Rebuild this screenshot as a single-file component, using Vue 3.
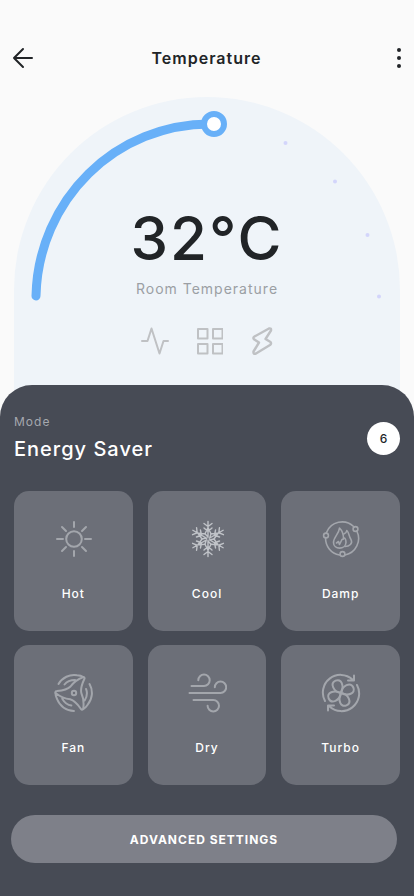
<script setup>
import { ref } from 'vue'

const modes = [
  { id: 'hot', label: 'Hot' },
  { id: 'cool', label: 'Cool' },
  { id: 'damp', label: 'Damp' },
  { id: 'fan', label: 'Fan' },
  { id: 'dry', label: 'Dry' },
  { id: 'turbo', label: 'Turbo' },
]
const temperature = ref(32)
const sixths = [0, 60, 120, 180, 240, 300]
const thirds = [0, 120, 240]
const quarters = [0, 90, 180, 270]
</script>

<template>
  <main class="screen">
    <header class="topbar">
      <button class="bar-button" type="button" aria-label="Back">
        <svg width="22" height="22" viewBox="0 0 22 22" class="ink">
          <path d="M20 11H2M11 2L2 11l9 9" />
        </svg>
      </button>
      <h1 class="title">Temperature</h1>
      <button class="bar-button end" type="button" aria-label="More options">
        <svg width="4" height="22" viewBox="0 0 4 22" class="dots">
          <circle cx="2" cy="3" r="2" />
          <circle cx="2" cy="11" r="2" />
          <circle cx="2" cy="19" r="2" />
        </svg>
      </button>
    </header>

    <section class="dial">
      <svg class="gauge" viewBox="0 0 386 210" aria-hidden="true">
        <path class="gauge-arc" d="M22 199C24 104 101 25 200 27" />
        <circle class="gauge-knob" cx="200" cy="27" r="10" />
        <g class="gauge-ticks">
          <circle cx="271.500" cy="46" r="2" />
          <circle cx="321" cy="84.500" r="2" />
          <circle cx="353.500" cy="138" r="2" />
          <circle cx="365" cy="199.500" r="2" />
        </g>
      </svg>
      <div class="readout">
        <p class="degrees">{{ temperature }}°C</p>
        <p class="caption">Room Temperature</p>
        <div class="tools">
          <button class="tool" type="button" aria-label="Activity">
            <svg width="28" height="28" viewBox="0 0 28 28">
              <path d="M1 14h5.500L10.500 1.500l8 25L22.500 14H27" />
            </svg>
          </button>
          <button class="tool" type="button" aria-label="Rooms">
            <svg width="28" height="28" viewBox="0 0 28 28">
              <path d="M3 2h9.500v9.500H3zM18 2h9.500v9.500H18zM3 17h9.500v9.500H3zM18 17h9.500v9.500H18z" />
            </svg>
          </button>
          <button class="tool" type="button" aria-label="Power">
            <svg width="28" height="28" viewBox="0 0 28 28" class="bolt">
              <path d="M20 1.500L5.500 9.500Q3.500 10.800 5 12.300L10 15.500 4.500 24.500Q4 27.500 7 26.500L21 18Q22.800 16.500 21.500 15L16.500 12 22 3.500Q22.500 .800 20 1.500z" />
            </svg>
          </button>
        </div>
      </div>
    </section>

    <section class="sheet">
      <div class="mode-head">
        <div>
          <p class="mode-label">Mode</p>
          <h2 class="mode-name">Energy Saver</h2>
        </div>
        <span class="badge">{{ modes.length }}</span>
      </div>

      <div class="mode-grid">
        <button v-for="mode in modes" :key="mode.id" class="mode-card" type="button">
          <svg class="mode-icon" :class="mode.id" width="40" height="40" viewBox="-1 0 40 40" aria-hidden="true">
            <g v-if="mode.id === 'hot'">
              <circle cx="20" cy="20" r="7.800" />
              <path d="M20 3v5M20 32v5M3 20h6M31 20h6M8 8l4 4M28 28l4 4M32 8l-4 4M12 28l-4 4" />
            </g>
            <g v-else-if="mode.id === 'cool'" transform="translate(20 20)">
              <path
                v-for="angle in sixths"
                :key="angle"
                :transform="`rotate(${angle})`"
                d="M0-1.500V-17.500M-4-15.500L0-12.500 4-15.500M-4-11L0-7.500 4-11M0-11.500L-3-5.200M0-11.500L3-5.200M0-2L-3-5.200"
              />
            </g>
            <g v-else-if="mode.id === 'damp'">
              <path d="M31.600 7.500A16.800 16.800 0 0 0 4.500 13.500M3.600 18.500A16.800 16.800 0 0 0 17.500 36M23 36A16.800 16.800 0 0 0 34.800 12" />
              <circle cx="33.500" cy="10" r="2.400" />
              <circle cx="4" cy="16.500" r="2.400" />
              <circle cx="20.500" cy="35" r="2.400" />
              <path d="M17.500 9C17 15 11.500 18 11.500 23.500C11.500 31 23.500 31 24 23.500C24 19.500 22.500 18.500 21.500 19.500C21.500 15 20 11.500 17.500 9z" />
              <path d="M21.800 15Q24.500 14 24.800 11.500C27.500 14 26.500 17 29 20.500C31 24.500 27.500 27.500 23 27.500M14.500 24l2-1.500 1 3 2.500-5 1.500-.500" />
            </g>
            <g v-else-if="mode.id === 'fan'" transform="translate(20 20)">
              <circle r="2.200" />
              <path
                v-for="angle in thirds"
                :key="angle"
                :transform="`rotate(${angle})`"
                d="M9.300-16C3-13.500-1-10-3.500-6.500C-6-4-11-2.500-17-2Q-19-2-18.500 0M-15.500-9A18 18 0 0 1 3-17.700Q7-17.500 9.300-16M-9.500-8.500Q-6-13 1-13"
              />
            </g>
            <g v-else-if="mode.id === 'dry'">
              <path d="M3.500 13H16a5.700 5.700 0 1 0-5.700-5.700M1.500 20H32.500a5.700 5.700 0 1 0-5.700-5.700M5.500 27H25.300a5.700 5.700 0 1 1-5.700 5.700" />
            </g>
            <g v-else transform="translate(19 20)">
              <path
                v-for="angle in quarters"
                :key="angle"
                :transform="`rotate(${angle - 24})`"
                d="M0 0C-6.500-4-6.500-13.500 0-13.500S6-5 0 0"
              />
              <path d="M-16 8A17.700 17.700 0 0 1 11.500-13.500M13-17.500v5H7M16-8A17.700 17.700 0 0 1-11.500 13.500M-13 17.500v-5H-7" />
            </g>
          </svg>
          <span class="mode-text">{{ mode.label }}</span>
        </button>
      </div>

      <button class="advanced" type="button">ADVANCED SETTINGS</button>
    </section>
  </main>
</template>

<style>
body {
  margin: 0;
  background: #fafafa;
}
</style>

<style scoped>
.screen {
  display: flex;
  flex-direction: column;
  min-height: 100vh;
  font-family: Inter, "Liberation Sans", sans-serif;
  letter-spacing: 1px;
  color: #212427;
}

button {
  margin: 0;
  padding: 0;
  border: 0;
  background: none;
  font: inherit;
  letter-spacing: inherit;
  color: inherit;
  cursor: pointer;
}

svg {
  display: block;
  fill: none;
  stroke-linecap: round;
  stroke-linejoin: round;
}

h1,
h2,
p {
  margin: 0;
}

.topbar {
  display: grid;
  grid-template-columns: 1fr auto 1fr;
  align-items: center;
  padding: 46px 13px 27px 12px;
}

.bar-button {
  justify-self: start;
}

.end {
  justify-self: end;
}

.ink {
  stroke: #212427;
  stroke-width: 2;
}

.dots {
  fill: #212427;
}

.title {
  font-size: 16px;
  line-height: 24px;
  font-weight: 600;
}

.dial {
  display: grid;
  margin: 0 14px;
  padding-bottom: 70px;
  border-radius: 193px 193px 0 0;
  background: #eff4f9;
}

.gauge,
.readout {
  grid-area: 1 / 1;
}

.gauge {
  width: 100%;
}

.gauge-arc {
  stroke: #68b0f8;
  stroke-width: 9;
}

.gauge-knob {
  fill: #ffffff;
  stroke: #68b0f8;
  stroke-width: 6;
}

.gauge-ticks {
  fill: #d3d5fb;
}

.readout {
  display: flex;
  flex-direction: column;
  align-items: center;
  padding-top: 105px;
}

.degrees {
  font-size: 60px;
  line-height: 72px;
  font-weight: 500;
  letter-spacing: 2px;
}

.caption {
  margin-top: 5px;
  font-size: 14px;
  line-height: 20px;
  color: #9b9fa4;
}

.tools {
  display: flex;
  gap: 26px;
  margin-top: 28px;
  padding-left: 3px;
}

.tool {
  stroke: #bfc1c4;
  stroke-width: 2;
}

.bolt {
  stroke-width: 2.4;
}

.sheet {
  flex: 1;
  margin-top: -40px;
  padding: 28px 0 33px;
  border-radius: 32px 32px 0 0;
  background: #474b55;
  color: #ffffff;
}

.mode-head {
  display: flex;
  align-items: center;
  justify-content: space-between;
  padding: 0 14px;
}

.mode-label {
  font-size: 12px;
  line-height: 18px;
  color: #a5a8ae;
}

.mode-name {
  margin-top: 4px;
  font-size: 20px;
  line-height: 28px;
  font-weight: 500;
}

.badge {
  display: grid;
  place-items: center;
  width: 33px;
  height: 33px;
  border-radius: 50%;
  background: #ffffff;
  color: #212427;
  font-size: 12px;
  font-weight: 500;
  letter-spacing: 0;
}

.mode-grid {
  display: grid;
  grid-template-columns: repeat(3, 1fr);
  gap: 14px 15px;
  margin: 28px 14px 30px;
}

.mode-card {
  display: flex;
  flex-direction: column;
  align-items: center;
  gap: 26px;
  height: 140px;
  padding-top: 28px;
  border-radius: 15px;
  background: #6c6f78;
}

.mode-icon {
  stroke: #a3a6ac;
  stroke-width: 2;
}

.cool {
  stroke: #c0c3c8;
  stroke-width: 1.4;
}

.damp {
  stroke-width: 1.6;
}

.mode-text {
  font-size: 12px;
  line-height: 18px;
  font-weight: 500;
}

.advanced {
  display: block;
  width: calc(100% - 28px);
  height: 48px;
  margin: 0 17px 0 11px;
  border-radius: 24px;
  background: #7e8089;
  font-size: 12px;
  font-weight: 700;
}
</style>
